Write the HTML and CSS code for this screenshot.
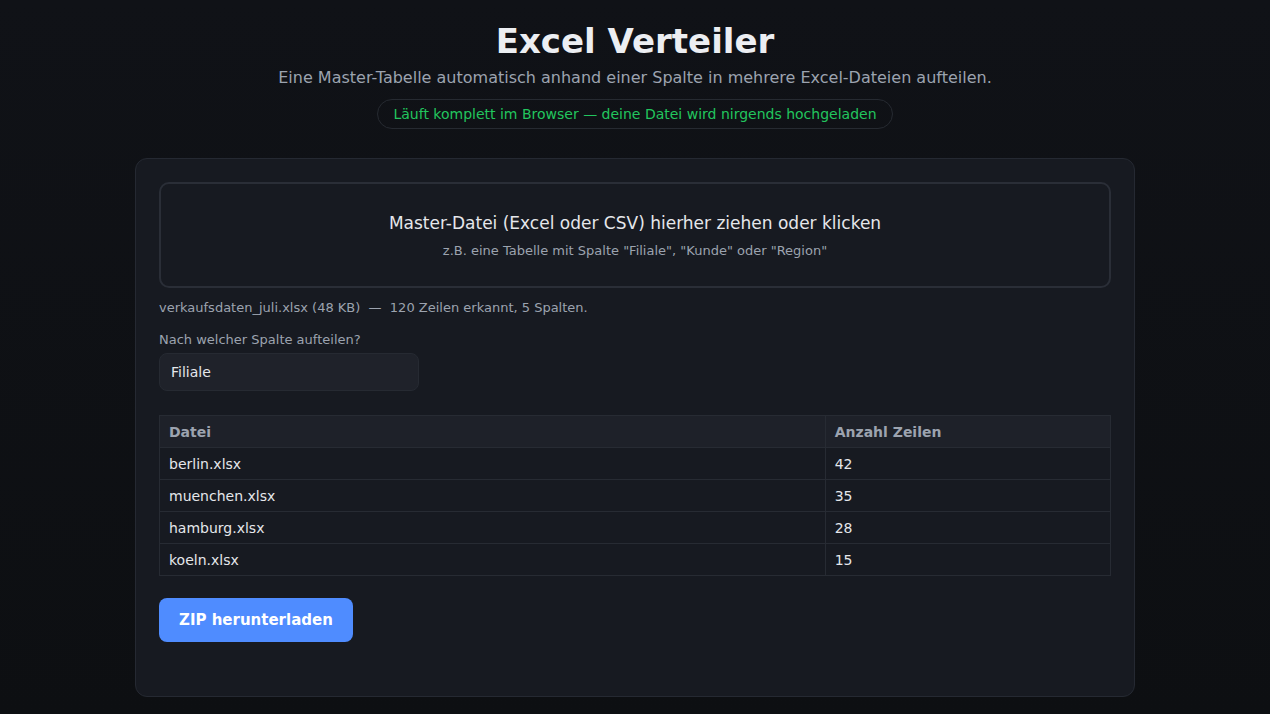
FILE: index.html
```html
<!DOCTYPE html>
<html>
<head>
    <title>Excel Verteiler</title>
    <link rel="stylesheet" href="styles.css">
</head>
<body>
    <header class="header">
        <h1 class="title">Excel Verteiler</h1>
        <p class="subtitle">Eine Master-Tabelle automatisch anhand einer Spalte in mehrere Excel-Dateien aufteilen.</p>
        <span class="pill">Läuft komplett im Browser — deine Datei wird nirgends hochgeladen</span>
    </header>

    <main class="card">
        <div class="dropzone">
            <div class="drop-title">Master-Datei (Excel oder CSV) hierher ziehen oder klicken</div>
            <div class="drop-hint">z.B. eine Tabelle mit Spalte "Filiale", "Kunde" oder "Region"</div>
        </div>

        <div class="file-info">verkaufsdaten_juli.xlsx (48 KB) &nbsp;— &nbsp;120 Zeilen erkannt, 5 Spalten.</div>

        <label class="field-label" for="column">Nach welcher Spalte aufteilen?</label>
        <div class="select" id="column">Filiale</div>

        <table class="result">
            <thead>
                <tr><th class="col-file">Datei</th><th>Anzahl Zeilen</th></tr>
            </thead>
            <tbody>
                <tr><td>berlin.xlsx</td><td>42</td></tr>
                <tr><td>muenchen.xlsx</td><td>35</td></tr>
                <tr><td>hamburg.xlsx</td><td>28</td></tr>
                <tr><td>koeln.xlsx</td><td>15</td></tr>
            </tbody>
        </table>

        <button class="download">ZIP herunterladen</button>
    </main>
</body>
</html>
```

FILE: styles.css
```css
body {
    font-family: "DejaVu Sans", sans-serif;
    background: linear-gradient(180deg, #101217 0%, #0d0f12 100%);
    color: #e5e7eb;
    margin: 0;
    padding: 0;
    min-height: 100vh;
}
.header {
    display: flex;
    flex-direction: column;
    align-items: center;
    padding-top: 21px;
}
.title {
    font-size: 34px;
    font-weight: bold;
    color: #eceef2;
    margin: 0;
    line-height: 40px;
}
.subtitle {
    font-size: 16px;
    color: #9ca3af;
    margin: 6px 0 0;
    line-height: 22px;
}
.pill {
    margin-top: 10px;
    font-size: 14px;
    color: #22c55e;
    border: 1px solid #262a31;
    border-radius: 16px;
    padding: 6px 15px;
    line-height: 16px;
}
.card {
    width: 952px;
    margin: 29px auto 0;
    background-color: #171a21;
    border: 1px solid #252932;
    border-radius: 12px;
    padding: 23px 23px 54px;
}
.dropzone {
    border: 2px solid #2a2e37;
    border-radius: 10px;
    height: 102px;
    display: flex;
    flex-direction: column;
    align-items: center;
    justify-content: center;
}
.drop-title {
    font-size: 17px;
    color: #e5e7eb;
    margin-top: 1px;
}
.drop-hint {
    font-size: 13px;
    color: #9ca3af;
    margin-top: 10px;
}
.file-info {
    font-size: 13px;
    color: #9ca3af;
    margin-top: 12px;
    line-height: 16px;
}
.field-label {
    display: block;
    font-size: 13px;
    color: #9ca3af;
    margin-top: 16px;
    line-height: 16px;
}
.select {
    width: 236px;
    height: 36px;
    margin-top: 5px;
    padding: 0 11px;
    display: flex;
    align-items: center;
    font-size: 14px;
    color: #e5e7eb;
    background-color: #1f222a;
    border: 1px solid #262a32;
    border-radius: 8px;
}
.result {
    width: 100%;
    margin-top: 24px;
    border-collapse: collapse;
    font-size: 14px;
}
.result th, .result td {
    border: 1px solid #272b33;
    text-align: left;
    padding: 0 9px;
    height: 31px;
}
.result th {
    background-color: #1e2129;
    color: #9ca3af;
    font-weight: bold;
}
.result td {
    color: #e5e7eb;
}
.col-file {
    width: 70%;
}
.download {
    margin-top: 22px;
    font-family: "DejaVu Sans", sans-serif;
    font-size: 15px;
    font-weight: bold;
    color: #ffffff;
    background-color: #4f8cff;
    border: none;
    border-radius: 8px;
    height: 44px;
    padding: 0 20px;
    cursor: pointer;
}
```
